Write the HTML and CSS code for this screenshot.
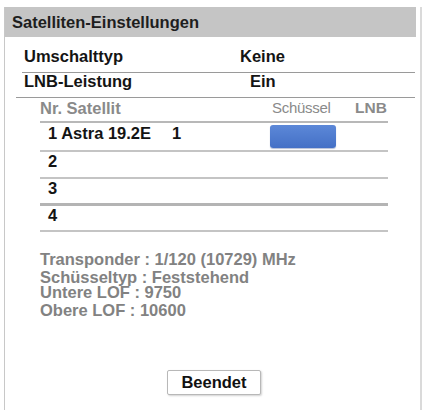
FILE: index.html
```html
<!DOCTYPE html>
<html lang="de">
<head>
<meta charset="utf-8">
<title>Satelliten-Einstellungen</title>
<link rel="stylesheet" href="styles.css">
</head>
<body>
<div class="panel">
  <div class="header">Satelliten-Einstellungen</div>
  <div class="setting setting-first">
    <span class="label label-first">Umschalttyp</span>
    <span class="value">Keine</span>
  </div>
  <div class="setting setting-second">
    <span class="label label-second">LNB-Leistung</span>
    <span class="value">Ein</span>
  </div>
  <div class="table">
    <div class="thead">
      <span class="th-name">Nr. Satellit</span>
      <span class="th-dish">Schüssel</span>
      <span class="th-lnb">LNB</span>
    </div>
    <div class="trow trow-1">
      <span class="cell-name">1 Astra 19.2E</span>
      <span class="cell-num">1</span>
      <span class="dish-btn"></span>
    </div>
    <div class="trow trow-2"><span class="cell-name">2</span></div>
    <div class="trow trow-3"><span class="cell-name">3</span></div>
    <div class="trow trow-4"><span class="cell-name">4</span></div>
  </div>
  <div class="info">
    <div class="info-line info-1">Transponder : 1/120 (10729) MHz</div>
    <div class="info-line info-2">Schüsseltyp : Feststehend</div>
    <div class="info-line info-3">Untere LOF : 9750</div>
    <div class="info-line info-4">Obere LOF : 10600</div>
  </div>
  <div class="actions">
    <button class="btn" type="button">Beendet</button>
  </div>
</div>
</body>
</html>
```
FILE: styles.css
```css
html, body {
  margin: 0;
  padding: 0;
  background: #ffffff;
}

body {
  font-family: "Liberation Sans", Arial, sans-serif;
  font-size: 16.5px;
  font-weight: bold;
  color: #141414;
  overflow: hidden;
}

.panel {
  box-sizing: border-box;
  margin: 7px 0 0 4px;
  width: 418px;
  height: 403px;
  border-left: 1px solid #c8c8c8;
  border-right: 2px solid #dadada;
  display: flex;
  flex-direction: column;
}

.header {
  height: 30px;
  line-height: 30px;
  margin-right: 4px;
  padding-left: 7px;
  background: #c5c5c5;
  color: #1e1e1e;
}

.setting {
  display: flex;
  margin-right: 5px;
  border-bottom: 1px solid #9a9a9a;
}

.setting-first {
  margin-left: 17px;
  padding-left: 2px;
  height: 26px;
  padding-top: 9px;
  line-height: 20px;
}

.setting-second {
  margin-left: 11px;
  padding-left: 8px;
  height: 24px;
  line-height: 16px;
}

.label-first { width: 216px; }
.label-second { width: 226px; }

.table {
  margin-left: 35px;
  width: 348px;
}

.thead {
  display: flex;
  height: 25px;
  line-height: 20px;
  border-bottom: 2px solid #b8b8b8;
  color: #8a8a8a;
  box-sizing: border-box;
}

.th-name { width: 232px; }

.th-dish {
  width: 83px;
  font-weight: normal;
  font-size: 15px;
  letter-spacing: -0.3px;
}

.th-lnb { font-size: 15.5px; }

.trow {
  display: flex;
  line-height: 18px;
  padding-left: 8px;
  border-bottom: 2px solid #c4c4c4;
}

.trow-1 { height: 27px; }
.trow-1 .cell-name { padding-top: 1px; }
.trow-2 { height: 25px; }
.trow-3 { height: 24px; border-bottom: 3px solid #b4b4b4; }
.trow-4 { height: 24px; }

.cell-name { width: 124px; }

.cell-num {
  width: 98px;
  padding-top: 1px;
}

.dish-btn {
  align-self: flex-start;
  margin-top: 2px;
  width: 66px;
  height: 23px;
  border-radius: 3px;
  background: linear-gradient(#5c88d8, #4470c6);
  box-shadow: 0 1px 1px rgba(40, 70, 140, 0.35);
}

.info {
  padding-left: 35px;
  margin-top: 18px;
  color: #828282;
}

.info-line {
  line-height: 18px;
  height: 18px;
}

.info-3 { margin-top: -3px; }

.actions {
  margin-top: 51px;
  padding-left: 162px;
}

.btn {
  width: 94px;
  height: 25px;
  padding: 0;
  font-family: "Liberation Sans", Arial, sans-serif;
  font-size: 16.5px;
  font-weight: bold;
  color: #111;
  background: #ffffff;
  border: 1px solid #b8b8b8;
  border-radius: 2px;
  box-shadow: 1px 1px 2px rgba(0, 0, 0, 0.18);
}
```
